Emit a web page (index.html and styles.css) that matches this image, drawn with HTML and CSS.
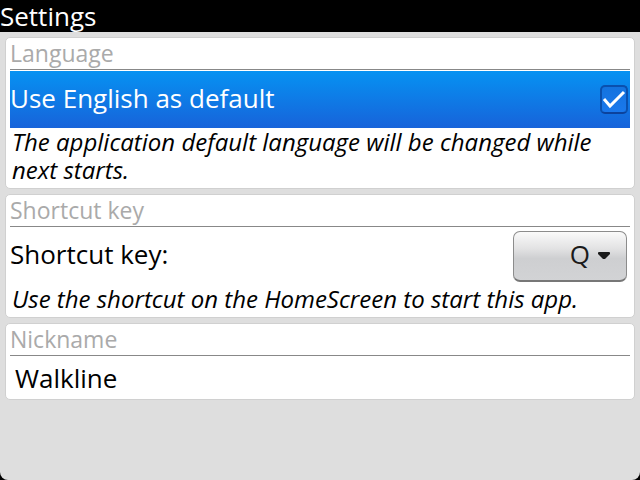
FILE: index.html
```html
<!DOCTYPE html>
<html lang="en">
<head>
<meta charset="utf-8">
<title>Settings</title>
<link rel="stylesheet" href="styles.css">
</head>
<body>
<header class="title-bar"><h1>Settings</h1></header>
<main class="content">
  <section class="card">
    <h2>Language</h2>
    <div class="row row-focus">
      <label for="english">Use English as default</label>
      <span class="check">
        <input type="checkbox" id="english" checked>
        <svg viewBox="0 0 28 30" aria-hidden="true"><path d="M4 14l6 7L24 7" fill="none" stroke="#fff" stroke-width="3"/></svg>
      </span>
    </div>
    <p class="note">The application default language will be changed while next starts.</p>
  </section>
  <section class="card">
    <h2>Shortcut key</h2>
    <div class="row">
      <label for="key">Shortcut key:</label>
      <span class="picker">
        <select id="key"><option>Q</option></select>
        <svg viewBox="0 0 14 8" aria-hidden="true"><path d="M2 0h10q1 0 1 1v1L8 7H6L1 2V1q0-1 1-1z" fill="#1a1a1a"/></svg>
      </span>
    </div>
    <p class="note">Use the shortcut on the HomeScreen to start this app.</p>
  </section>
  <section class="card">
    <h2><label for="nick">Nickname</label></h2>
    <input class="field" id="nick" type="text" value="Walkline">
  </section>
</main>
</body>
</html>
```
FILE: styles.css
```css
* { box-sizing: border-box; }
body {
  margin: 0;
  min-height: 100vh;
  display: flex;
  flex-direction: column;
  background: #000;
  color: #000;
  font-family: "Open Sans", "Noto Sans", sans-serif;
  font-size: 26px;
}
h1, h2, p { margin: 0; font-weight: 400; }
.title-bar { color: #fff; }
h1 { font-size: 26px; line-height: 32px; }
.content {
  flex: 1;
  display: flex;
  flex-direction: column;
  gap: 5px;
  padding: 5px;
  background: #dedede;
  border-radius: 0 0 8px 8px;
}
.card {
  padding: 0 4px 4px;
  background: #fff;
  border: 1px solid #d0d0d0;
  border-radius: 5px;
}
h2 {
  border-bottom: 1px solid #888;
  color: #aaa;
  font-size: 23px;
  line-height: 31px;
}
.row {
  display: flex;
  align-items: center;
  justify-content: space-between;
  min-height: 58px;
}
.row label { line-height: 32px; padding-bottom: 4px; }
.row-focus { min-height: 57px; margin-top: 1px; color: #fff; background: linear-gradient(#0692f2, #1763da); }
.check { position: relative; width: 28px; height: 30px; margin-right: 2px; }
.check input {
  appearance: none;
  display: block;
  width: 28px;
  height: 29px;
  margin: 0;
  border: 2px solid #0a50ae;
  border-bottom-color: #0c429c;
  border-radius: 5px;
  background: linear-gradient(#1473df, #1a78ec);
}
.check svg { position: absolute; inset: 0; pointer-events: none; }
.note { padding: 0 14px 0 2px; font-size: 24px; line-height: 28px; font-style: italic; }
.picker { position: relative; margin-right: 3px; }
select {
  appearance: none;
  display: block;
  width: 114px;
  height: 51px;
  padding: 0 36px 3px 0;
  border: 1px solid #8c8c8c;
  border-bottom: 2px solid #777;
  border-radius: 7px;
  background: linear-gradient(#fafafa, #e2e2e3 35%, #cecfd1 55%, #d2d3d5);
  color: #1a1a1a;
  font: inherit;
  text-align: right;
  text-align-last: right;
}
.picker svg { position: absolute; right: 16px; top: 21px; width: 14px; pointer-events: none; }
.field {
  display: block;
  width: 100%;
  height: 39px;
  padding: 5px 5px 0;
  border: 0;
  background: transparent;
  color: inherit;
  font: inherit;
  line-height: 34px;
}
```
